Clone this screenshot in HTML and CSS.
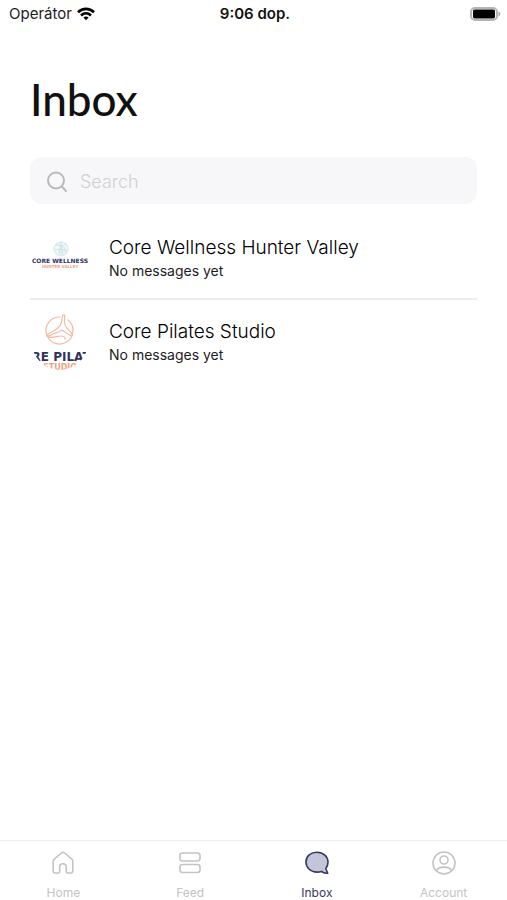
FILE: index.html
```html
<!DOCTYPE html>
<html lang="en">
<head>
<meta charset="utf-8">
<meta name="viewport" content="width=device-width, initial-scale=1">
<title>Inbox</title>
<link rel="stylesheet" href="styles.css">
</head>
<body>
<header class="status">
  <div class="carrier">Operátor
    <svg width="18" height="14" viewBox="0 0 18 14" fill="none" stroke="#000" stroke-width="2.6" aria-hidden="true"><path d="M1 5.2c4.6-4.5 11.4-4.5 16 0M4 8.5c2.9-2.8 7.1-2.8 10 0"/><path d="M6.4 10.5c1.5-1.3 3.7-1.3 5.2 0L9 13.3z" fill="#000" stroke="none"/></svg>
  </div>
  <div class="clock">9:06 dop.</div>
  <svg class="battery" width="32" height="14" viewBox="0 0 32 14" aria-hidden="true"><rect x="2" y="1" width="26" height="12" rx="4" fill="#fff" stroke="#b4b4b4" stroke-width="2"/><rect x="4" y="2.600" width="22" height="8.800" rx="1.600"/><path d="M29.500 4.500c2.400.8 2.400 4.200 0 5z" fill="#aaa"/></svg>
</header>
<main>
  <h1>Inbox</h1>
  <label class="search">
    <svg width="22" height="22" viewBox="0 0 22 22" fill="none" stroke="#b9b9bb" stroke-width="2" stroke-linecap="round" aria-hidden="true"><circle cx="9" cy="9.500" r="8"/><path d="m14.800 15.300 4.200 4.700"/></svg>
    <input type="search" placeholder="Search" aria-label="Search">
  </label>
  <ul class="threads">
    <li>
      <svg class="logo" width="60" height="60" viewBox="0 0 60 60" aria-hidden="true">
        <g fill="none" stroke="#c3e0e7" stroke-width=".8"><circle cx="31" cy="21" r="7" fill="#f1f8fa"/><path d="M26 17c4 0 7 3 7 10M36 16c-4 1-7 4-7 10M31 14.500V27M25 22c4-1 8-1 12 1M28 16l6 3 2 6"/></g>
        <text x="30" y="35" class="name small">CORE WELLNESS</text>
        <text x="30" y="40" class="sub small-sub">HUNTER VALLEY</text>
      </svg>
      <div><h2>Core Wellness Hunter Valley</h2><p>No messages yet</p></div>
    </li>
    <li>
      <svg class="logo" width="60" height="60" viewBox="0 0 60 60" aria-hidden="true">
        <defs><clipPath id="round"><circle cx="30" cy="30" r="28"/></clipPath></defs>
        <g clip-path="url(#round)">
          <g fill="none" stroke="#f3bba5" stroke-width="1.200" stroke-linecap="round" stroke-linejoin="round"><path d="M30 5A13.500 13.500 0 1 0 38 8"/><path d="M34 1.500c1.500 3 .2 6 .5 9 .5 4 3 7 6.500 10 1.200 1.200 1.800 2.500.5 3.500-3-2-6-3.500-10-6-2 3-6 2.500-9.500 4.500-2 1-4 2.500-5 1.500 0-2 3-3 5.500-4.500 4-2 7-4 8.500-8 1.500-4 .5-7 3-10zM18 25c5 1.500 9-1 13-1 3 0 5 2 4 3"/></g>
          <text x="30" y="49" class="name">CORE PILATES</text>
          <text x="30" y="58" class="sub">STUDIO</text>
        </g>
      </svg>
      <div><h2>Core Pilates Studio</h2><p>No messages yet</p></div>
    </li>
  </ul>
</main>
<nav class="tabs" aria-label="Main">
  <a href="#home"><svg width="26" height="26" viewBox="0 0 26 26" aria-hidden="true"><path d="M3.200 11.200c0-1 .4-1.800 1.200-2.400l7-5.800c1-.8 2.200-.8 3.200 0l7 5.800c.8.6 1.200 1.400 1.200 2.400V21c0 1.400-.6 2-2 2h-3.300c-.8 0-1.200-.4-1.200-1.200V17a3.300 3.300 0 0 0-6.600 0v4.800c0 .8-.4 1.200-1.200 1.200H5.200c-1.400 0-2-.6-2-2z"/></svg>Home</a>
  <a href="#feed"><svg width="26" height="26" viewBox="0 0 26 26" aria-hidden="true"><rect x="3" y="3" width="20" height="8" rx="2.500"/><rect x="3" y="14.500" width="20" height="8" rx="2.500"/></svg>Feed</a>
  <a href="#inbox" class="active" aria-current="page"><svg width="26" height="26" viewBox="0 0 26 26" aria-hidden="true"><path d="M13 2.300c6.200 0 11 4.100 11 9.700 0 2.700-.9 4.800-2.200 6.500l1.900 4.700c-2.400.3-4.500-.2-6.200-1.800-1.400.5-2.900.7-4.500.7-6.200 0-11-4.300-11-10.100S6.800 2.300 13 2.300z"/></svg>Inbox</a>
  <a href="#account"><svg width="26" height="26" viewBox="0 0 26 26" aria-hidden="true"><circle cx="13" cy="13" r="11"/><circle cx="13" cy="10" r="4"/><path d="M5.500 20.500c2-4.500 13-4.500 15 0"/></svg>Account</a>
</nav>
</body>
</html>
```
FILE: styles.css
```css
* { box-sizing: border-box; }
body {
  margin: 0;
  min-height: 100vh;
  display: flex;
  flex-direction: column;
  background: #fff;
  color: #1c1c1e;
  font-family: Inter, sans-serif;
}
.status {
  display: grid;
  grid-template-columns: 1fr auto 1fr;
  align-items: center;
  height: 27px;
  padding: 0 6px 0 9px;
  font-size: 15px;
}
.carrier { display: flex; align-items: center; gap: 5px; }
.clock { font-weight: 600; color: #111; }
.battery { justify-self: end; }
main { flex: 1; padding: 44px 30px 0; }
h1 {
  margin: 0;
  font: 500 44px/56px Lato, sans-serif;
  color: #111;
}
.search {
  display: flex;
  align-items: center;
  gap: 11px;
  height: 47px;
  margin-top: 30px;
  padding: 2px 17px 0;
  border-radius: 12px;
  background: #f7f7fa;
}
.search input {
  flex: 1;
  min-width: 0;
  padding: 0;
  border: 0;
  outline: 0;
  background: none;
  font: 300 18px/24px Inter, sans-serif;
}
.search input::placeholder { color: #d0d0d2; opacity: 1; }
.threads { margin: 10px 0 0; padding: 0; list-style: none; }
.threads li {
  display: flex;
  align-items: center;
  gap: 19px;
  height: 84px;
  padding-top: 4px;
}
.threads li + li { border-top: 2px solid #ededee; padding-top: 2px; }
.logo { flex: none; }
h2, p { margin: 0; font-weight: 400; }
h2 { font-size: 19px; font-weight: 300; line-height: 25px; color: #000; }
p { font-size: 14px; line-height: 21px; }
.name { font: 700 12px "DejaVu Sans", sans-serif; fill: #30335f; text-anchor: middle; }
.sub { font: 700 8px "DejaVu Sans", sans-serif; fill: #f2a17f; text-anchor: middle; }
.small { font-size: 6px; }
.small-sub { font-size: 4px; }
.tabs {
  display: grid;
  grid-template-columns: repeat(4, 1fr);
  height: 60px;
  border-top: 1px solid #ededed;
}
.tabs a {
  display: flex;
  flex-direction: column;
  align-items: center;
  gap: 9px;
  padding-top: 9px;
  color: #c4c4c6;
  font-size: 12px;
  line-height: 16px;
  text-decoration: none;
}
.tabs svg { fill: none; stroke: currentColor; stroke-width: 1.6; stroke-linejoin: round; }
.tabs .active { color: #373960; }
.tabs .active svg { fill: #c3c6d8; }
```
